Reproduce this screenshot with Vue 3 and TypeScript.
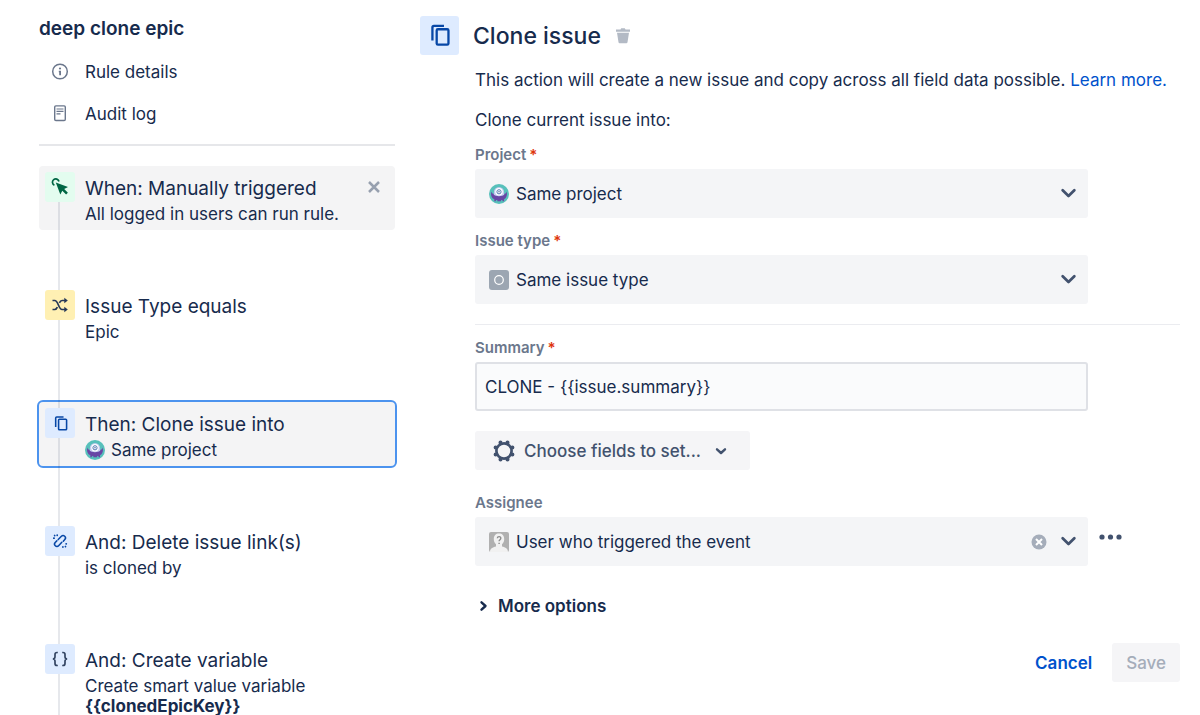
<script setup lang="ts">
import { ref } from 'vue'

type IconName = 'click' | 'shuffle' | 'copy' | 'unlink' | 'braces'

interface Step {
  id: number
  icon: IconName
  tone: 'green' | 'yellow' | 'blue'
  title: string
  text: string
  strong?: string
  filled?: boolean
  closable?: boolean
  avatar?: boolean
}

const steps: Step[] = [
  { id: 1, icon: 'click', tone: 'green', title: 'When: Manually triggered', text: 'All logged in users can run rule.', filled: true, closable: true },
  { id: 2, icon: 'shuffle', tone: 'yellow', title: 'Issue Type equals', text: 'Epic' },
  { id: 3, icon: 'copy', tone: 'blue', title: 'Then: Clone issue into', text: 'Same project', avatar: true },
  { id: 4, icon: 'unlink', tone: 'blue', title: 'And: Delete issue link(s)', text: 'is cloned by' },
  { id: 5, icon: 'braces', tone: 'blue', title: 'And: Create variable', text: 'Create smart value variable', strong: '{{clonedEpicKey}}' },
]

const selected = ref(3)
const project = ref('Same project')
const issueType = ref('Same issue type')
const summary = ref('CLONE - {{issue.summary}}')
const assignee = ref('User who triggered the event')
</script>

<template>
  <div class="page">
    <svg class="defs" aria-hidden="true">
      <symbol id="monster" viewBox="0 0 20 20">
        <circle cx="10" cy="10" r="10" fill="#57c0bb" />
        <path d="M2.400 7.500c.3 1.800 1.100 2.300 2.400 2.300h10.400c1.300 0 2.100-.5 2.400-2.300 1 3.500-.2 6.700-2.700 7.900l.3 1.900h-1.500l-.4-1.200h-1.200v1.200H8.300v-1.200H7.100l-.4 1.200H5.200l.3-1.900C2.600 14.200 1.400 11 2.400 7.500z" fill="#6847a5" />
        <path d="M4.800 10.800V8.200a5.200 5.200 0 0 1 10.400 0v2.600c-1.500 1.800-8.900 1.800-10.400 0z" fill="#c3cbef" />
        <circle cx="10" cy="7.800" r="3.800" fill="#fff" />
        <circle cx="10" cy="7.800" r="2.100" fill="#fff" stroke="#5577b5" stroke-width="1" />
        <circle cx="10" cy="7.800" r=".7" fill="#36568f" />
      </symbol>
      <symbol id="copy" viewBox="0 0 24 24">
        <path d="M5.200 16.800V4.200a1.500 1.500 0 0 1 1.500-1.500h9.600" fill="none" stroke="currentColor" stroke-width="2.200" />
        <rect x="9.300" y="6" width="11.300" height="14.800" rx="1.200" fill="none" stroke="currentColor" stroke-width="2.200" />
      </symbol>
      <symbol id="chevron" viewBox="0 0 16 16">
        <path d="M2.500 5 8 10.300 13.500 5" fill="none" stroke="currentColor" stroke-width="2.600" stroke-linecap="round" stroke-linejoin="round" />
      </symbol>
    </svg>

    <aside class="sidebar">
      <h2 class="rule-name">deep clone epic</h2>
      <nav class="links">
        <a href="#details" class="nav-link">
          <svg class="nav-icon" viewBox="0 0 18 18" aria-hidden="true">
            <circle cx="9" cy="8.500" r="7.300" fill="none" stroke="#6b778c" stroke-width="1.500" />
            <circle cx="9" cy="5.500" r="1.100" fill="#6b778c" />
            <path d="M7.800 7.800h2.200v4.500H8.200V9.200h-.4z" fill="#6b778c" />
          </svg>
          Rule details
        </a>
        <a href="#audit" class="nav-link">
          <svg class="nav-icon" viewBox="0 0 18 18" aria-hidden="true">
            <rect x="3.700" y=".9" width="10.600" height="14.600" rx="1.200" fill="none" stroke="#6b778c" stroke-width="1.400" />
            <path d="M5.500 4h7M5.500 6.400h7M5.500 8.800h4" stroke="#6b778c" stroke-width="1.200" />
          </svg>
          Audit log
        </a>
      </nav>

      <ol class="steps">
        <li
          v-for="step in steps"
          :key="step.id"
          class="step"
          :class="{ filled: step.filled, selected: step.id === selected }"
          @click="selected = step.id"
        >
          <span class="tile" :class="step.tone">
            <svg v-if="step.icon === 'click'" width="18" height="18" viewBox="0 0 18 18" aria-hidden="true">
              <path d="M3.400 7.200A3.300 3.300 0 1 1 8 3.500" fill="none" stroke="currentColor" stroke-width="1.700" />
              <path d="M4.800 4.500 17 9l-3.800 2 3.700 3.800-1.800 1.800-3.800-3.800-2 3.700z" fill="currentColor" />
            </svg>
            <svg v-else-if="step.icon === 'shuffle'" width="18" height="18" viewBox="0 0 18 18" aria-hidden="true">
              <path d="M1.500 4.500h2.200c3.800 0 3.600 9 7.400 9h3.400M1.500 13.500h2.200c1.300 0 2.100-1 2.700-2.300M8.400 6.800c.6-1.300 1.400-2.300 2.700-2.300h3.400" fill="none" stroke="currentColor" stroke-width="1.700" />
              <path d="M13.300 1.700 16.800 4.500l-3.500 2.800zM13.300 10.700l3.500 2.800-3.500 2.800z" fill="currentColor" />
            </svg>
            <svg v-else-if="step.icon === 'copy'" width="17" height="17" aria-hidden="true"><use href="#copy" /></svg>
            <svg v-else-if="step.icon === 'unlink'" width="16" height="16" viewBox="0 0 16 16" fill="none" stroke="currentColor" stroke-width="1.500" stroke-linecap="round" aria-hidden="true">
              <path d="M6.200 6.600 9.400 3.300a2.300 2.300 0 0 1 3.400 3.200L11.300 8.200M9.800 9.300 6.600 12.700a2.300 2.300 0 0 1-3.400-3.200L4.800 7.900" />
              <path d="M5.200 2v.3M1.800 5.200h.3M2.600 2.500l.1.100M10.900 13.900v.2M14.100 10.800h.2M13.400 13.500l.1.100" stroke-width="1.700" />
            </svg>
            <svg v-else width="18" height="18" viewBox="0 0 18 18" fill="none" stroke="#344563" stroke-width="1.700" aria-hidden="true">
              <path d="M6.800 2.500H6c-1.400 0-2 .7-2 2v2.300C4 8.200 3.300 9 1.800 9 3.300 9 4 9.800 4 11.200v2.300c0 1.300.6 2 2 2h.8M11.200 2.500h.8c1.400 0 2 .7 2 2v2.300c0 1.400.7 2.200 2.200 2.200-1.500 0-2.200.8-2.200 2.200v2.300c0 1.300-.6 2-2 2h-.8" />
            </svg>
          </span>
          <div class="step-body">
            <h3 class="step-title">{{ step.title }}</h3>
            <p class="step-text">
              <svg v-if="step.avatar" class="avatar" aria-hidden="true"><use href="#monster" /></svg>
              <span>{{ step.text }}<template v-if="step.strong"><br><strong>{{ step.strong }}</strong></template></span>
            </p>
          </div>
          <button v-if="step.closable" type="button" class="close" aria-label="Remove trigger">
            <svg width="12" height="12" viewBox="0 0 12 12" aria-hidden="true">
              <path d="m1 1 10 10M11 1 1 11" stroke="#97a0af" stroke-width="2.500" />
            </svg>
          </button>
        </li>
      </ol>
    </aside>

    <main class="main">
      <header class="header">
        <span class="tile large blue"><svg width="25" height="25" aria-hidden="true"><use href="#copy" /></svg></span>
        <h1 class="heading">Clone issue</h1>
        <button type="button" class="plain" aria-label="Delete action">
          <svg width="16" height="16" viewBox="0 0 16 16" fill="#b3bac5" aria-hidden="true">
            <path d="M1 1.500h4.500l.7-1.200h3.600l.7 1.200H15v2.200H1zM2 4.700h12l-1.500 9.600c-.1.700-.5 1-1.200 1H4.700c-.7 0-1.100-.3-1.200-1z" />
          </svg>
        </button>
      </header>

      <form class="form" @submit.prevent>
        <p class="para">This action will create a new issue and copy across all field data possible. <a href="#learn">Learn more.</a></p>
        <p class="para second">Clone current issue into:</p>

        <div class="field">
          <label for="project">Project<span class="req">*</span></label>
          <div class="select-box">
            <svg class="lead" aria-hidden="true"><use href="#monster" /></svg>
            <select id="project" v-model="project"><option>Same project</option></select>
            <svg class="chevron" aria-hidden="true"><use href="#chevron" /></svg>
          </div>
        </div>

        <div class="field">
          <label for="type">Issue type<span class="req">*</span></label>
          <div class="select-box">
            <svg class="lead" viewBox="0 0 20 20" aria-hidden="true">
              <rect width="20" height="20" rx="3" fill="#9ca6b2" />
              <circle cx="10" cy="10" r="4.300" fill="none" stroke="#fff" stroke-width="1.200" />
            </svg>
            <select id="type" v-model="issueType"><option>Same issue type</option></select>
            <svg class="chevron" aria-hidden="true"><use href="#chevron" /></svg>
          </div>
        </div>

        <hr class="divider">

        <div class="field">
          <label for="summary">Summary<span class="req">*</span></label>
          <input id="summary" v-model="summary" class="text-input" type="text">
        </div>

        <button type="button" class="choose">
          <svg width="22" height="22" viewBox="0 0 22 22" aria-hidden="true">
            <circle cx="11" cy="11" r="7.600" fill="none" stroke="currentColor" stroke-width="2.700" />
            <g stroke="currentColor" stroke-width="4" stroke-linecap="round">
              <path d="M7.500 2.600v.1M14.500 2.600v.1M7.500 19.300v.1M14.500 19.300v.1M2.600 7.500h.1M2.600 14.500h.1M19.300 7.500h.1M19.300 14.500h.1" />
            </g>
          </svg>
          <span>Choose fields to set...</span>
          <svg class="small-chevron" width="12" height="12" viewBox="0 0 12 12" aria-hidden="true">
            <path d="M2 4.300 6 8l4-3.700" fill="none" stroke="currentColor" stroke-width="2.400" stroke-linecap="round" stroke-linejoin="round" />
          </svg>
        </button>

        <div class="field assignee">
          <label for="assignee">Assignee</label>
          <div class="select-box">
            <svg class="lead" viewBox="0 0 20 20" aria-hidden="true">
              <rect width="20" height="20" rx="2" fill="#b0b0b0" />
              <path d="M1 20c0-3.500 2.500-4.700 6-5.500v-2.200C5.300 10.800 4.800 9 4.800 7c0-3.500 2-5.500 5.200-5.500s5.200 2 5.200 5.500c0 2-.5 3.800-2.200 5.300v2.200c3.500.8 6 2 6 5.500z" fill="#f1f1f1" />
              <path d="M8.300 6.200c.2-2.200 3.600-2.100 3.500.1 0 1.500-1.700 1.500-1.700 3M10.100 10.700v1.300" fill="none" stroke="#8c8c8c" stroke-width="1.400" />
            </svg>
            <select id="assignee" v-model="assignee"><option>User who triggered the event</option></select>
            <button type="button" class="plain" aria-label="Clear assignee">
              <svg width="16" height="16" viewBox="0 0 16 16" aria-hidden="true">
                <circle cx="8" cy="8" r="7.500" fill="#a5adba" />
                <path d="m5 5 6 6M11 5l-6 6" stroke="#fff" stroke-width="2" />
              </svg>
            </button>
            <svg class="chevron" aria-hidden="true"><use href="#chevron" /></svg>
          </div>
          <button type="button" class="plain more" aria-label="Assignee options">
            <svg width="24" height="6" viewBox="0 0 24 6" fill="#42526e" aria-hidden="true">
              <circle cx="3" cy="3" r="2.600" /><circle cx="11.500" cy="3" r="2.600" /><circle cx="20" cy="3" r="2.600" />
            </svg>
          </button>
        </div>

        <button type="button" class="plain options">
          <svg width="10" height="12" viewBox="0 0 10 12" aria-hidden="true">
            <path d="M2.500 2.300 6.500 6l-4 3.700" fill="none" stroke="currentColor" stroke-width="2.400" stroke-linecap="round" stroke-linejoin="round" />
          </svg>
          More options
        </button>

        <footer class="footer">
          <button type="button" class="btn cancel">Cancel</button>
          <button type="submit" class="btn save" disabled>Save</button>
        </footer>
      </form>
    </main>
  </div>
</template>

<style>
body {
  margin: 0;
  background: #fff;
}
</style>

<style scoped>
.page {
  display: grid;
  grid-template-columns: minmax(280px, 395px) minmax(0, 1fr);
  column-gap: 25px;
  height: 100vh;
  overflow: hidden;
  box-sizing: border-box;
  padding-right: 20px;
  font-family: Inter, "Liberation Sans", sans-serif;
  font-size: 17px;
  color: #172b4d;
}

.page *,
.page *::before {
  box-sizing: border-box;
}

.defs {
  position: absolute;
  width: 0;
  height: 0;
}

h1, h2, h3, p {
  margin: 0;
}

a {
  color: #0052cc;
  text-decoration: none;
}

button, input, select {
  font: inherit;
  color: inherit;
}

button {
  cursor: pointer;
}

.plain {
  display: inline-flex;
  padding: 0;
  border: 0;
  background: none;
}

.sidebar {
  padding: 17px 0 0 39px;
}

.rule-name {
  font-size: 19px;
  line-height: 24px;
  font-weight: 600;
}

.links {
  padding: 10px 0 9px;
  border-bottom: 2px solid #e6e7ea;
}

.nav-link {
  display: flex;
  align-items: center;
  gap: 16px;
  height: 42px;
  padding-left: 12px;
  color: inherit;
}

.nav-icon {
  width: 18px;
  height: 18px;
}

.steps {
  position: relative;
  display: flex;
  flex-direction: column;
  gap: 54px;
  margin: 20px 0 0;
  padding: 0;
  list-style: none;
}

.steps::before {
  content: "";
  position: absolute;
  z-index: 1;
  top: 35px;
  bottom: 0;
  left: 19px;
  width: 2px;
  background: rgba(9, 30, 66, 0.1);
}

.step {
  display: flex;
  gap: 10px;
  min-height: 64px;
  padding: 6px;
  border-radius: 4px;
}

.filled,
.selected {
  background: #f4f4f5;
}

.selected {
  outline: 2px solid #4c93ee;
}

.tile {
  position: relative;
  z-index: 2;
  flex: none;
  display: flex;
  align-items: center;
  justify-content: center;
  width: 30px;
  height: 30px;
  border-radius: 3px;
}

.large {
  width: 39px;
  height: 39px;
}

.green {
  background: #e3fcef;
  color: #006644;
}

.yellow {
  background: #fff0b3;
  color: #253858;
}

.blue {
  background: #deebff;
  color: #0747a6;
}

.step-body {
  flex: 1;
  min-width: 0;
  padding-top: 4px;
}

.step-title {
  font-size: 19px;
  line-height: 26px;
  font-weight: 400;
}

.step-text {
  display: flex;
  gap: 6px;
  margin-top: 2px;
  line-height: 20px;
}

.avatar {
  width: 20px;
  height: 20px;
}

.close {
  align-self: flex-start;
  display: flex;
  padding: 9px;
  border: 0;
  background: none;
}

.main {
  padding-top: 16px;
}

.header {
  display: flex;
  align-items: center;
  gap: 14px;
}

.heading {
  font-size: 23px;
  line-height: 32px;
  font-weight: 500;
}

.form {
  display: flex;
  flex-direction: column;
  align-items: flex-start;
  padding: 13px 0 0 55px;
}

.para {
  line-height: 24px;
}

.second {
  margin-top: 16px;
}

.field {
  position: relative;
  align-self: stretch;
  display: flex;
  flex-direction: column;
  gap: 5px;
  margin: 14px 92px 0 0;
}

label {
  font-size: 15px;
  line-height: 18px;
  font-weight: 600;
  color: #6b778c;
}

.req {
  margin-left: 3px;
  color: #de350b;
}

.select-box {
  display: flex;
  align-items: center;
  height: 49px;
  padding: 0 11px 0 14px;
  border-radius: 3px;
  background: #f4f5f7;
}

.lead {
  flex: none;
  width: 20px;
  height: 20px;
}

select {
  appearance: none;
  flex: 1;
  min-width: 0;
  height: 100%;
  padding: 0 7px;
  border: 0;
  background: none;
}

.chevron {
  flex: none;
  width: 17px;
  height: 17px;
  margin-left: 13px;
  color: #42526e;
  pointer-events: none;
}

.divider {
  align-self: stretch;
  height: 1px;
  margin: 20px 0 0;
  border: 0;
  background: #ebecf0;
}

.text-input {
  height: 49px;
  padding: 0 8px;
  border: 2px solid #dfe1e6;
  border-radius: 3px;
  background: #fafbfc;
}

.choose {
  display: flex;
  align-items: center;
  gap: 9px;
  height: 39px;
  margin-top: 20px;
  padding: 0 23px 0 18px;
  border: 0;
  border-radius: 3px;
  background: #f5f5f7;
  color: #42526e;
  font-weight: 500;
}

.small-chevron {
  margin-left: 5px;
}

.assignee {
  margin-top: 24px;
}

.more {
  position: absolute;
  left: 100%;
  bottom: 26px;
  margin-left: 11px;
}

.options {
  align-items: center;
  gap: 9px;
  margin: 28px 0 0 4px;
  line-height: 24px;
  font-weight: 600;
}

.footer {
  align-self: flex-end;
  display: flex;
  gap: 6px;
  margin-top: 25px;
}

.btn {
  height: 39px;
  padding: 0 14px;
  border: 0;
  border-radius: 3px;
  background: none;
  font-weight: 500;
}

.cancel {
  color: #0052cc;
  font-weight: 600;
}

.save {
  background: #f5f5f7;
  color: #a5adba;
}
</style>
